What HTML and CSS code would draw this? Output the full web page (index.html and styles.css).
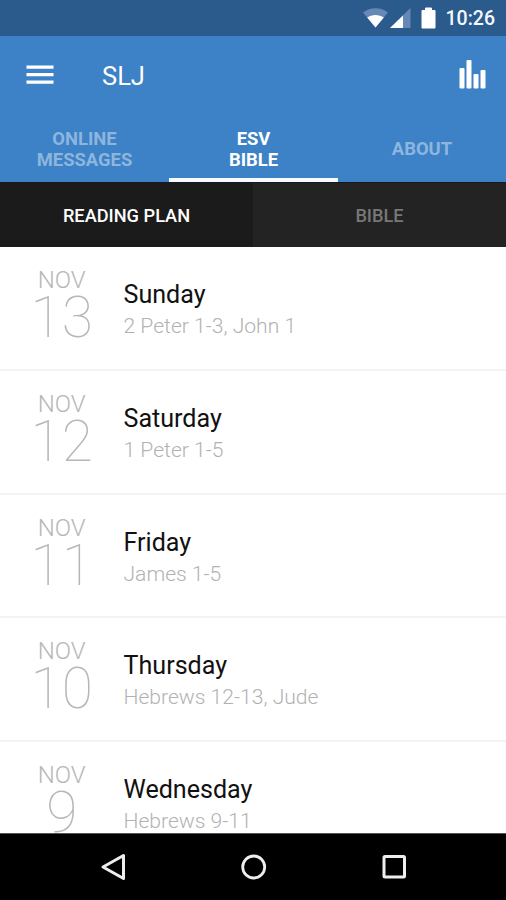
FILE: index.html
```html
<!DOCTYPE html>
<html lang="en">
<head>
<meta charset="utf-8">
<title>SLJ</title>
<link rel="stylesheet" href="styles.css">
</head>
<body>
<div class="phone">
  <div class="status">
    <svg class="status-icons" width="76" height="24" viewBox="0 0 76 24">
      <path d="M0 5.5C7-.2 18-.2 25 5.5L12.5 20.5Z" fill="#6688b4"/>
      <path d="M4.200 10.500C9 7.100 16 7.100 20.800 10.500L12.500 20.500Z" fill="#fff"/>
      <path d="M27 21 47.500 1V21Z" fill="#6688b4"/>
      <path d="M27 21 40 8.500V21Z" fill="#fff"/>
      <path d="M59 3.500h3.500V1h6v2.500H72V21H59Z" fill="#fff" stroke="#fff" stroke-width="1" stroke-linejoin="round"/>
    </svg>
    <span class="clock">10:26</span>
  </div>
  <header class="appbar">
    <svg class="menu" width="28" height="20" viewBox="0 0 28 20" fill="#fff"><path d="M.5.500h27v3.300H.5zM.5 8h27v3.300H.5zM.5 15.500h27V18.800H.5z"/></svg>
    <h1 class="title">SLJ</h1>
    <svg class="bars" width="28" height="30" viewBox="0 0 28 30" fill="#fff"><rect x=".5" y="9" width="5" height="20.500" rx="1"/><rect x="7.500" y="1" width="5" height="28.500" rx="1"/><rect x="14.500" y="15" width="5" height="14.500" rx="1"/><rect x="21.500" y="11" width="5" height="18.500" rx="1"/></svg>
  </header>
  <nav class="tabs">
    <a class="tab">ONLINE<br>MESSAGES</a>
    <a class="tab active">ESV<br>BIBLE</a>
    <a class="tab">ABOUT</a>
  </nav>
  <nav class="subtabs">
    <a class="subtab active">READING PLAN</a>
    <a class="subtab">BIBLE</a>
  </nav>
  <main class="list">
    <div class="row"><div class="date"><span class="month">NOV</span><span class="day">13</span></div><div class="info"><span class="name">Sunday</span><span class="reading">2 Peter 1-3, John 1</span></div></div>
    <div class="row"><div class="date"><span class="month">NOV</span><span class="day">12</span></div><div class="info"><span class="name">Saturday</span><span class="reading">1 Peter 1-5</span></div></div>
    <div class="row"><div class="date"><span class="month">NOV</span><span class="day">11</span></div><div class="info"><span class="name">Friday</span><span class="reading">James 1-5</span></div></div>
    <div class="row"><div class="date"><span class="month">NOV</span><span class="day">10</span></div><div class="info"><span class="name">Thursday</span><span class="reading">Hebrews 12-13, Jude</span></div></div>
    <div class="row"><div class="date"><span class="month">NOV</span><span class="day">9</span></div><div class="info"><span class="name">Wednesday</span><span class="reading">Hebrews 9-11</span></div></div>
  </main>
  <footer class="navbar">
    <svg width="26" height="28" viewBox="0 0 26 28"><path d="M3 14 23.500 2.500V25.500Z" fill="none" stroke="#eee" stroke-width="3" stroke-linejoin="round"/></svg>
    <svg width="28" height="28" viewBox="0 0 28 28"><circle cx="13.700" cy="14" r="11" fill="none" stroke="#eee" stroke-width="2.800"/></svg>
    <svg width="26" height="28" viewBox="0 0 26 28"><rect x="3" y="3.500" width="20.500" height="20.500" rx="1" fill="none" stroke="#eee" stroke-width="3"/></svg>
  </footer>
</div>
</body>
</html>
```

FILE: styles.css
```css
* { box-sizing: border-box; }
body { margin: 0; font-family: Roboto, sans-serif; }
.phone { width: 506px; height: 900px; display: flex; flex-direction: column; overflow: hidden; background: #fff; }
.status { flex: none; height: 36px; background: #2b5b8c; display: flex; align-items: center; justify-content: flex-end; padding-right: 11px; }
.status-icons { margin: 2px 7px 0 0; }
.clock { color: #f4f8fc; font-size: 19.500px; font-weight: 500; line-height: 36px; padding-top: 1px; }
.appbar { flex: none; height: 79px; background: #3d81c6; display: flex; align-items: center; padding: 0 19px 0 26px; }
.menu { margin-top: -1px; }
.title { margin: 1px 0 0 48px; color: #fff; font-size: 25.500px; font-weight: 400; line-height: 30px; }
.bars { margin-left: auto; margin-top: -3px; }
.tabs { flex: none; height: 67px; background: #3d81c6; display: grid; grid-template-columns: 169px 169px 168px; }
.tab { display: flex; align-items: center; justify-content: center; text-align: center; font-size: 18.400px; font-weight: 700; line-height: 21px; color: #8db6df; border-bottom: 4px solid transparent; padding-top: 4px; }
.tab.active { color: #fff; border-bottom-color: #f8fbfe; }
.subtabs { flex: none; height: 65px; display: grid; grid-template-columns: 1fr 1fr; background: #232323; border-top: 1px solid #16191c; }
.subtab { display: flex; align-items: center; justify-content: center; font-size: 18.200px; color: #777; font-weight: 500; padding-top: 1px; }
.subtab.active { color: #fff; background: #1b1b1b; }
.list { flex: 1; min-height: 0; overflow: hidden; }
.row { height: 123.750px; display: flex; border-bottom: 2px solid #f3f3f3; padding-top: 19px; }
.date { width: 123.500px; display: flex; flex-direction: column; align-items: center; color: #b5b8b8; }
.month { font-size: 24px; font-weight: 300; line-height: 28px; }
.day { font-size: 57px; font-weight: 100; line-height: 48px; }
.info { display: flex; flex-direction: column; padding-top: 13px; }
.name { font-size: 25.100px; color: #111; line-height: 32px; }
.reading { font-size: 21.100px; color: #b2b2b2; font-weight: 300; line-height: 30px; }
.navbar { flex: none; height: 67px; background: #000; border-top: 1px solid #555; display: flex; justify-content: space-between; align-items: center; padding: 0 99px 0 100px; }
```
